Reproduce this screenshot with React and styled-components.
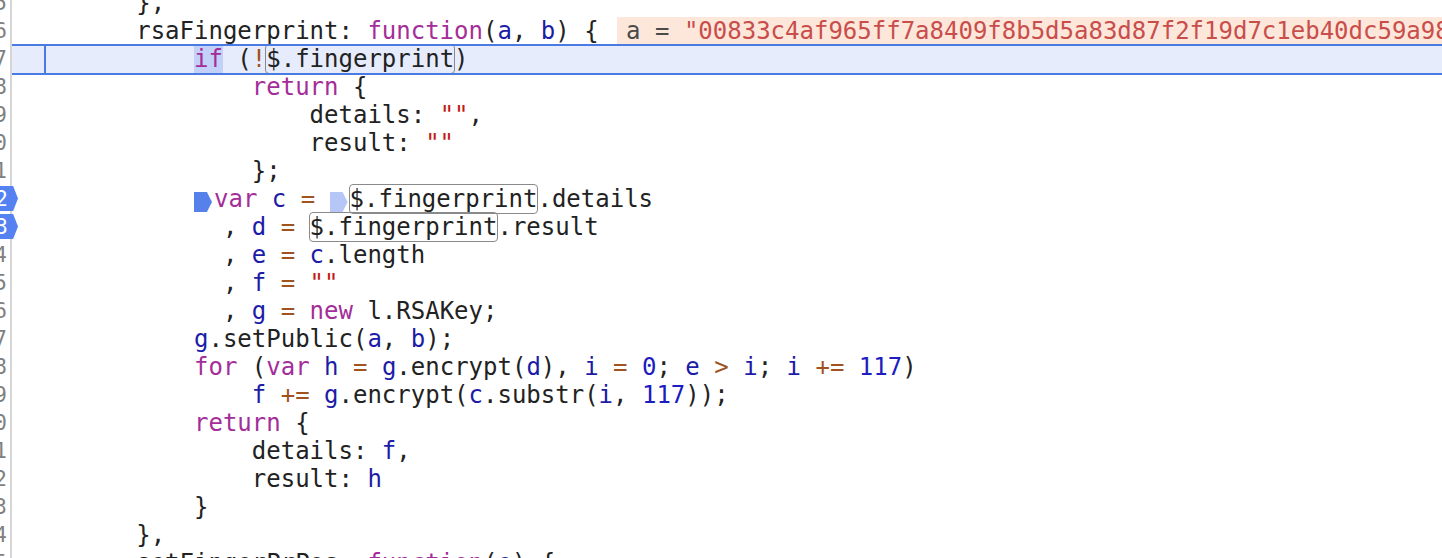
import React from "react";
import styled, { createGlobalStyle } from "styled-components";

const GlobalStyle = createGlobalStyle`
  html, body { margin: 0; padding: 0; background: #ffffff; overflow: hidden; }
  #root { width: 1442px; height: 558px; overflow: hidden; }
`;

const Editor = styled.div`
  width: 1442px;
  height: 558px;
  overflow: hidden;
  background: #ffffff;
  font-family: "DejaVu Sans Mono", "Liberation Mono", monospace;
`;

const Lines = styled.div`
  display: flex;
  flex-direction: column;
  margin-top: -11px;
`;

const Row = styled.div`
  display: flex;
  height: 28px;
  flex-shrink: 0;
`;

const Gutter = styled.div`
  position: relative;
  box-sizing: border-box;
  width: 12px;
  flex-shrink: 0;
  border-right: 2px solid #d6d6d6;
  display: flex;
  justify-content: flex-end;
  align-items: center;
  padding-right: 3px;
  font-size: 21px;
  line-height: 28px;
  color: #7f7f7f;
  white-space: pre;
`;

const LineNo = styled.span`
  flex-shrink: 0;
`;

const Badge = styled.div`
  position: absolute;
  left: 0;
  top: 1px;
  width: 18px;
  height: 25px;
  box-sizing: border-box;
  padding-right: 10px;
  display: flex;
  justify-content: flex-end;
  align-items: center;
  background: #5582f2;
  color: #ffffff;
  clip-path: polygon(0 0, 73% 0, 100% 50%, 73% 100%, 0 100%);
  z-index: 2;
  overflow: hidden;
`;

const Code = styled.div`
  position: relative;
  flex: 1;
  box-sizing: border-box;
  padding-left: 8.6px;
  white-space: pre;
  font-size: 24px;
  line-height: 28px;
  color: #222222;
  background: ${(p) => (p.$active ? "#e7ecfc" : "transparent")};

  &::before {
    content: "";
    display: ${(p) => (p.$active ? "block" : "none")};
    position: absolute;
    left: 0;
    right: 0;
    top: -1px;
    bottom: -2px;
    border-top: 2px solid #4a7be2;
    border-bottom: 2px solid #4a7be2;
    pointer-events: none;
  }

  &::after {
    content: "";
    display: ${(p) => (p.$active ? "block" : "none")};
    position: absolute;
    left: 32px;
    top: 0;
    bottom: 0;
    width: 2px;
    background: #4a7be2;
  }
`;

const colors = {
  p: "#222222",
  k: "#a32d99",
  v: "#1c1ca6",
  o: "#a0521f",
  n: "#1c1cc0",
  s: "#c41a16",
};

const Tok = styled.span`
  color: ${(p) => colors[p.$k] || "#222222"};
`;

const Exec = styled.span`
  background: #c3d1f8;
  color: ${colors.k};
`;

const Boxed = styled.span`
  outline: 1.5px solid #8a8a8a;
  outline-offset: 0;
  border-radius: 3px;
  color: #222222;
`;

const Mark = styled.span`
  display: inline-block;
  width: 18px;
  height: 20px;
  margin-right: 2px;
  vertical-align: -5px;
  background: ${(p) => (p.$tone === "dark" ? "#5680ea" : "#b6c6f6")};
  clip-path: polygon(0 0, 72% 0, 100% 50%, 72% 100%, 0 100%);
`;

const ValueChip = styled.span`
  margin-left: 18.5px;
  padding: 0 2000px 0 9px;
  background: #fce7da;
  color: #4a4a4a;
`;

const ValueStr = styled.span`
  color: #c94d4b;
`;

const lines = [
  [["p", "        },"]],
  [
    ["p", "        rsaFingerprint: "],
    ["k", "function"],
    ["p", "("],
    ["v", "a"],
    ["p", ", "],
    ["v", "b"],
    ["p", ") {"],
    { value: true },
  ],
  [
    ["p", "            "],
    { exec: "if" },
    ["p", " ("],
    ["o", "!"],
    { box: "$.fingerprint" },
    ["p", ")"],
  ],
  [["p", "                "], ["k", "return"], ["p", " {"]],
  [["p", "                    details: "], ["s", '""'], ["p", ","]],
  [["p", "                    result: "], ["s", '""']],
  [["p", "                };"]],
  [
    ["p", "            "],
    { mark: "dark" },
    ["k", "var"],
    ["p", " "],
    ["v", "c"],
    ["p", " "],
    ["o", "="],
    ["p", " "],
    { mark: "light" },
    { box: "$.fingerprint" },
    ["p", ".details"],
  ],
  [
    ["p", "              , "],
    ["v", "d"],
    ["p", " "],
    ["o", "="],
    ["p", " "],
    { box: "$.fingerprint" },
    ["p", ".result"],
  ],
  [
    ["p", "              , "],
    ["v", "e"],
    ["p", " "],
    ["o", "="],
    ["p", " "],
    ["v", "c"],
    ["p", ".length"],
  ],
  [["p", "              , "], ["v", "f"], ["p", " "], ["o", "="], ["p", " "], ["s", '""']],
  [
    ["p", "              , "],
    ["v", "g"],
    ["p", " "],
    ["o", "="],
    ["p", " "],
    ["k", "new"],
    ["p", " l.RSAKey;"],
  ],
  [
    ["p", "            "],
    ["v", "g"],
    ["p", ".setPublic("],
    ["v", "a"],
    ["p", ", "],
    ["v", "b"],
    ["p", ");"],
  ],
  [
    ["p", "            "],
    ["k", "for"],
    ["p", " ("],
    ["k", "var"],
    ["p", " "],
    ["v", "h"],
    ["p", " "],
    ["o", "="],
    ["p", " "],
    ["v", "g"],
    ["p", ".encrypt("],
    ["v", "d"],
    ["p", "), "],
    ["v", "i"],
    ["p", " "],
    ["o", "="],
    ["p", " "],
    ["n", "0"],
    ["p", "; "],
    ["v", "e"],
    ["p", " "],
    ["o", ">"],
    ["p", " "],
    ["v", "i"],
    ["p", "; "],
    ["v", "i"],
    ["p", " "],
    ["o", "+="],
    ["p", " "],
    ["n", "117"],
    ["p", ")"],
  ],
  [
    ["p", "                "],
    ["v", "f"],
    ["p", " "],
    ["o", "+="],
    ["p", " "],
    ["v", "g"],
    ["p", ".encrypt("],
    ["v", "c"],
    ["p", ".substr("],
    ["v", "i"],
    ["p", ", "],
    ["n", "117"],
    ["p", "));"],
  ],
  [["p", "            "], ["k", "return"], ["p", " {"]],
  [["p", "                details: "], ["v", "f"], ["p", ","]],
  [["p", "                result: "], ["v", "h"]],
  [["p", "            }"]],
  [["p", "        },"]],
  [
    ["p", "        setFingerPrPos: "],
    ["k", "function"],
    ["p", "("],
    ["v", "e"],
    ["p", ") {"],
  ],
];

const badges = { 7: true, 8: true };

function renderToken(t, i) {
  if (Array.isArray(t)) {
    return (
      <Tok key={i} $k={t[0]}>
        {t[1]}
      </Tok>
    );
  }
  if (t.exec) return <Exec key={i}>{t.exec}</Exec>;
  if (t.box) return <Boxed key={i}>{t.box}</Boxed>;
  if (t.mark) return <Mark key={i} $tone={t.mark} />;
  if (t.value)
    return (
      <ValueChip key={i}>
        {"a = "}
        <ValueStr>
          {'"00833c4af965ff7a8409f8b5d5a83d87f2f19d7c1eb40dc59a98c7e2f01b4d9a3c6e"'}
        </ValueStr>
      </ValueChip>
    );
  return null;
}

export default function App() {
  return (
    <>
      <GlobalStyle />
      <Editor>
        <Lines>
          {lines.map((tokens, n) => {
            const num = String(1835 + n);
            return (
              <Row key={n}>
                <Gutter>
                  <LineNo>{num}</LineNo>
                  {badges[n] && (
                    <Badge>
                      <LineNo>{num}</LineNo>
                    </Badge>
                  )}
                </Gutter>
                <Code $active={n === 2}>{tokens.map(renderToken)}</Code>
              </Row>
            );
          })}
        </Lines>
      </Editor>
    </>
  );
}
